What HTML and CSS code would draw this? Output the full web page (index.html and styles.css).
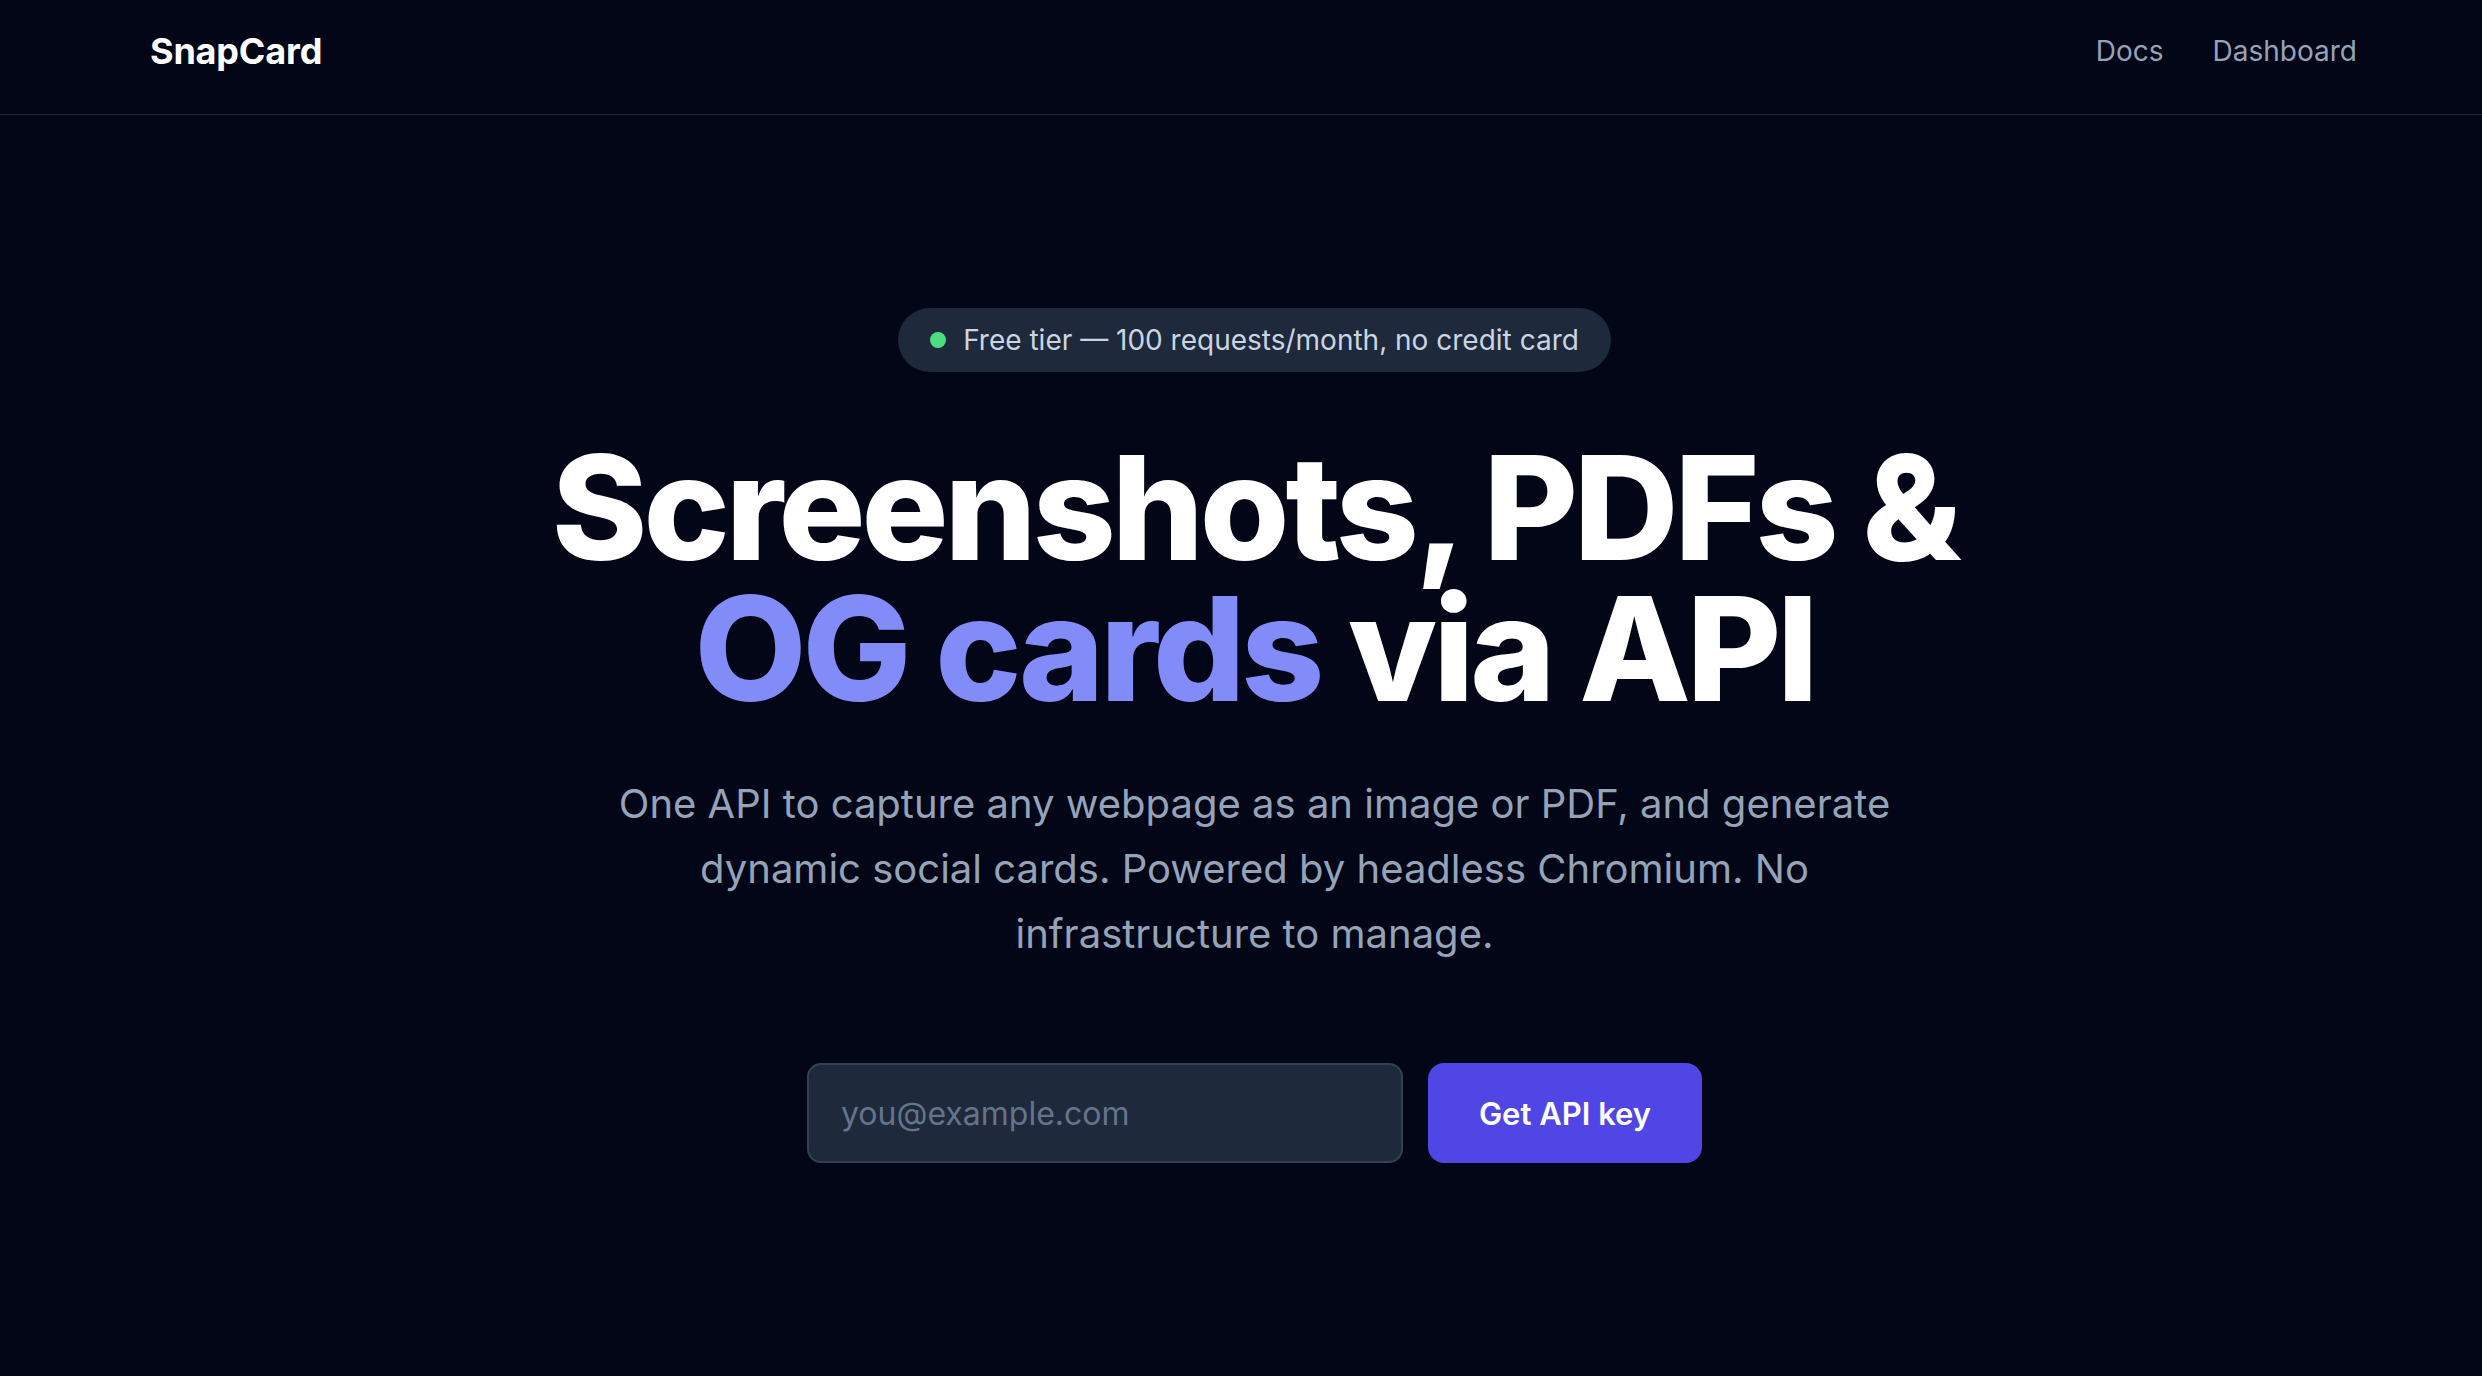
FILE: index.html
```html
<!DOCTYPE html>
<html lang="en">
<head>
<meta charset="utf-8">
<title>SnapCard</title>
<link rel="stylesheet" href="styles.css">
</head>
<body>
<div class="page">
  <header class="header">
    <div class="header-inner">
      <a class="logo" href="#">SnapCard</a>
      <nav class="nav">
        <a href="#">Docs</a>
        <a href="#">Dashboard</a>
      </nav>
    </div>
  </header>
  <main class="hero">
    <div class="badge"><span class="dot"></span><span>Free tier — 100 requests/month, no credit card</span></div>
    <h1 class="title">Screenshots, PDFs &amp;<br><span class="accent">OG cards</span> via API</h1>
    <p class="lead">One API to capture any webpage as an image or PDF, and generate dynamic social cards. Powered by headless Chromium. No infrastructure to manage.</p>
    <form class="signup">
      <input class="email" type="email" placeholder="you@example.com">
      <button class="cta" type="button">Get API key</button>
    </form>
  </main>
</div>
</body>
</html>
```
FILE: styles.css
```css
* { box-sizing: border-box; }
html, body {
  margin: 0;
  padding: 0;
  background: #020617;
}
body {
  font-family: Inter, "Noto Sans", sans-serif;
  color: #ffffff;
  min-height: 1376px;
}
.header {
  border-bottom: 1px solid #1e293b;
}
.header-inner {
  display: flex;
  justify-content: space-between;
  align-items: center;
  height: 114px;
  padding: 0 125px 13px 150px;
}
.logo {
  color: #ffffff;
  text-decoration: none;
  font-weight: 700;
  font-size: 36px;
  letter-spacing: -0.005em;
}
.nav {
  display: flex;
  gap: 49px;
}
.nav a {
  color: #94a3b8;
  text-decoration: none;
  font-size: 28px;
}
.hero {
  display: flex;
  flex-direction: column;
  align-items: center;
  padding-top: 193px;
  padding-left: 27px;
}
.badge {
  display: inline-flex;
  align-items: center;
  gap: 17px;
  height: 64px;
  padding: 0 32px;
  border-radius: 999px;
  background: #1e293b;
  color: #cbd5e1;
  font-size: 28px;
}
.dot {
  width: 16px;
  height: 16px;
  border-radius: 50%;
  background: #4ade80;
}
.title {
  margin: 65px 0 0;
  text-align: center;
  font-size: 145px;
  line-height: 141px;
  font-weight: 800;
  letter-spacing: -0.028em;
}
.accent {
  color: #818cf8;
}
.lead {
  margin: 52px 0 0;
  max-width: 1320px;
  text-align: center;
  color: #94a3b8;
  font-size: 40px;
  line-height: 65px;
}
.signup {
  display: flex;
  gap: 25px;
  margin-top: 97px;
}
.email {
  width: 596px;
  height: 100px;
  padding: 0 32px;
  border: 2px solid #334155;
  border-radius: 14px;
  background: #1e293b;
  color: #e2e8f0;
  font-family: Inter, "Noto Sans", sans-serif;
  font-size: 32px;
  outline: none;
}
.email::placeholder {
  color: #64748b;
}
.cta {
  width: 274px;
  height: 100px;
  border: none;
  border-radius: 16px;
  background: #4f46e5;
  color: #ffffff;
  font-family: Inter, "Noto Sans", sans-serif;
  font-size: 31px;
  font-weight: 600;
}
```
